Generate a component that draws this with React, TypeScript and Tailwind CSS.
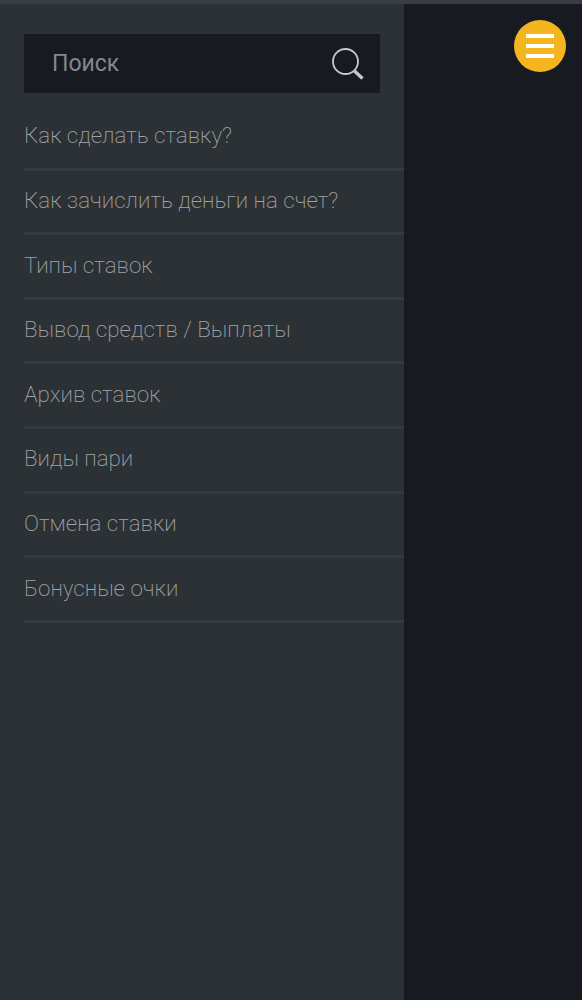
const items = [
  "Как сделать ставку?",
  "Как зачислить деньги на счет?",
  "Типы ставок",
  "Вывод средств / Выплаты",
  "Архив ставок",
  "Виды пари",
  "Отмена ставки",
  "Бонусные очки",
];

export default function App() {
  return (
    <div className="relative flex h-[1000px] w-full flex-col overflow-hidden bg-[#171a20] font-['Roboto',sans-serif] antialiased">
      <div className="h-[4px] bg-[#383d44]" />
      <div className="flex flex-1">
        <aside className="w-[404px] bg-[#2c3135] pl-[24px] pt-[30px]">
          <div className="mr-[24px] flex h-[59px] items-center justify-between bg-[#171a20] pl-[28px] pr-[15px] pt-[2px]">
            <span className="text-[23px] text-[#85878b]">Поиск</span>
            <svg width="34" height="34" viewBox="0 0 34 34" fill="none" className="-mt-[2px] text-[#c5c8cc]">
              <circle cx="14.5" cy="14.5" r="12.5" stroke="currentColor" strokeWidth="1.8" />
              <path d="M23.5 24 L31.5 31.5" stroke="currentColor" strokeWidth="3.4" />
            </svg>
          </div>
          <ul className="mt-[13px]">
            {items.map((t) => (
              <li
                key={t}
                className="flex h-[64.6px] items-center border-b-[3px] border-[#363b40] pb-[1px] text-[22.4px] font-extralight text-[#a0a2a6]"
              >
                {t}
              </li>
            ))}
          </ul>
        </aside>
      </div>
      <button className="absolute left-[514px] top-[20px] flex h-[52px] w-[52px] flex-col items-center justify-center gap-[6.5px] rounded-full bg-[#f5b51e]">
        <span className="h-[3.5px] w-[28px] bg-white" />
        <span className="h-[3.5px] w-[28px] bg-white" />
        <span className="h-[3.5px] w-[28px] bg-white" />
      </button>
    </div>
  );
}
